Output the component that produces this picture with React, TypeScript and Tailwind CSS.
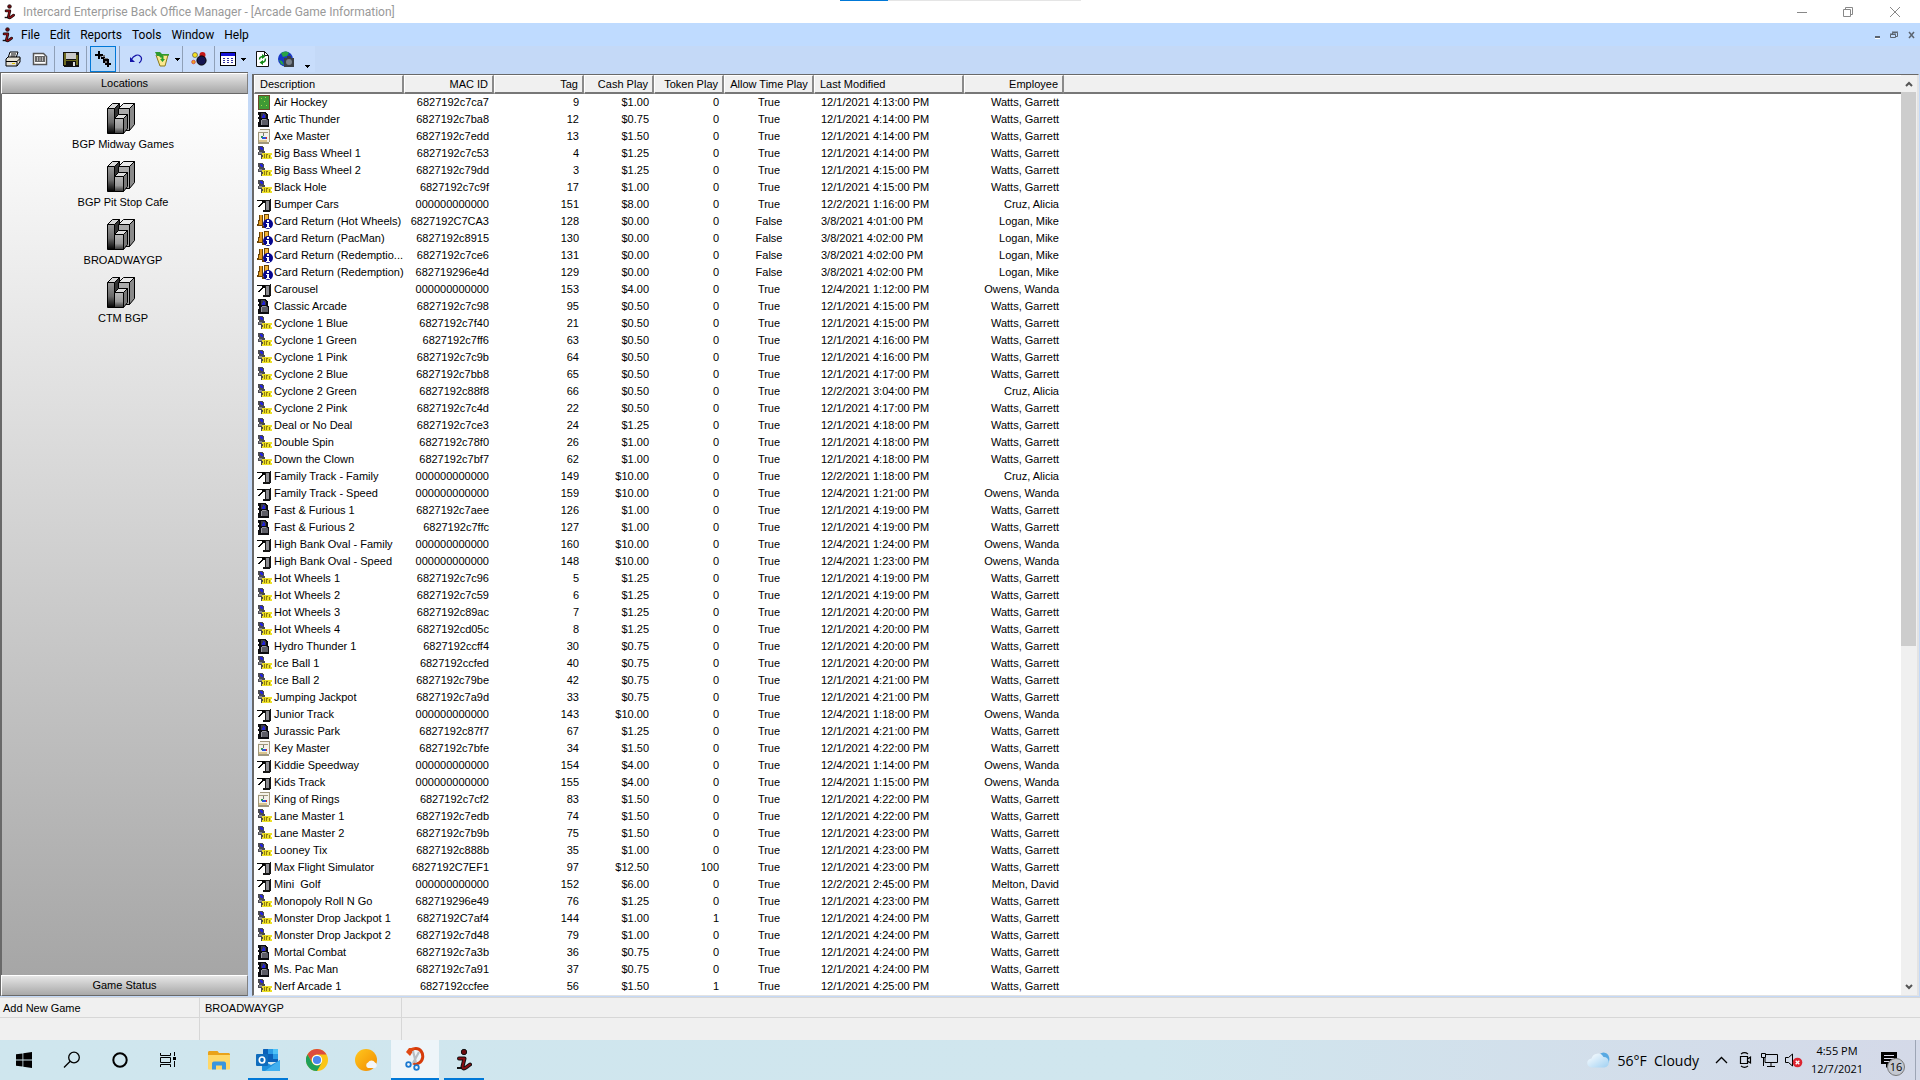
import React, { useState } from 'react';

type IconKind = 'hockey' | 'video' | 'crane' | 'ticket' | 'swipe' | 'return';

type Game = [
  icon: IconKind,
  name: string,
  mac: string,
  tag: number,
  cash: string,
  token: number,
  timePlay: boolean,
  modified: string,
  employee: string,
];

const WATTS = 'Watts, Garrett';
const CRUZ = 'Cruz, Alicia';
const LOGAN = 'Logan, Mike';
const OWENS = 'Owens, Wanda';
const NO_MAC = '000000000000';

const games: Game[] = [
  ['hockey', 'Air Hockey', '6827192c7ca7', 9, '$1.00', 0, true, '12/1/2021 4:13:00 PM', WATTS],
  ['video', 'Artic Thunder', '6827192c7ba8', 12, '$0.75', 0, true, '12/1/2021 4:14:00 PM', WATTS],
  ['crane', 'Axe Master', '6827192c7edd', 13, '$1.50', 0, true, '12/1/2021 4:14:00 PM', WATTS],
  ['ticket', 'Big Bass Wheel 1', '6827192c7c53', 4, '$1.25', 0, true, '12/1/2021 4:14:00 PM', WATTS],
  ['ticket', 'Big Bass Wheel 2', '6827192c79dd', 3, '$1.25', 0, true, '12/1/2021 4:15:00 PM', WATTS],
  ['ticket', 'Black Hole', '6827192c7c9f', 17, '$1.00', 0, true, '12/1/2021 4:15:00 PM', WATTS],
  ['swipe', 'Bumper Cars', NO_MAC, 151, '$8.00', 0, true, '12/2/2021 1:16:00 PM', CRUZ],
  ['return', 'Card Return (Hot Wheels)', '6827192C7CA3', 128, '$0.00', 0, false, '3/8/2021 4:01:00 PM', LOGAN],
  ['return', 'Card Return (PacMan)', '6827192c8915', 130, '$0.00', 0, false, '3/8/2021 4:02:00 PM', LOGAN],
  ['return', 'Card Return (Redemptio...', '6827192c7ce6', 131, '$0.00', 0, false, '3/8/2021 4:02:00 PM', LOGAN],
  ['return', 'Card Return (Redemption)', '682719296e4d', 129, '$0.00', 0, false, '3/8/2021 4:02:00 PM', LOGAN],
  ['swipe', 'Carousel', NO_MAC, 153, '$4.00', 0, true, '12/4/2021 1:12:00 PM', OWENS],
  ['video', 'Classic Arcade', '6827192c7c98', 95, '$0.50', 0, true, '12/1/2021 4:15:00 PM', WATTS],
  ['ticket', 'Cyclone 1 Blue', '6827192c7f40', 21, '$0.50', 0, true, '12/1/2021 4:15:00 PM', WATTS],
  ['ticket', 'Cyclone 1 Green', '6827192c7ff6', 63, '$0.50', 0, true, '12/1/2021 4:16:00 PM', WATTS],
  ['ticket', 'Cyclone 1 Pink', '6827192c7c9b', 64, '$0.50', 0, true, '12/1/2021 4:16:00 PM', WATTS],
  ['ticket', 'Cyclone 2 Blue', '6827192c7bb8', 65, '$0.50', 0, true, '12/1/2021 4:17:00 PM', WATTS],
  ['ticket', 'Cyclone 2 Green', '6827192c88f8', 66, '$0.50', 0, true, '12/2/2021 3:04:00 PM', CRUZ],
  ['ticket', 'Cyclone 2 Pink', '6827192c7c4d', 22, '$0.50', 0, true, '12/1/2021 4:17:00 PM', WATTS],
  ['ticket', 'Deal or No Deal', '6827192c7ce3', 24, '$1.25', 0, true, '12/1/2021 4:18:00 PM', WATTS],
  ['ticket', 'Double Spin', '6827192c78f0', 26, '$1.00', 0, true, '12/1/2021 4:18:00 PM', WATTS],
  ['ticket', 'Down the Clown', '6827192c7bf7', 62, '$1.00', 0, true, '12/1/2021 4:18:00 PM', WATTS],
  ['swipe', 'Family Track - Family', NO_MAC, 149, '$10.00', 0, true, '12/2/2021 1:18:00 PM', CRUZ],
  ['swipe', 'Family Track - Speed', NO_MAC, 159, '$10.00', 0, true, '12/4/2021 1:21:00 PM', OWENS],
  ['video', 'Fast & Furious 1', '6827192c7aee', 126, '$1.00', 0, true, '12/1/2021 4:19:00 PM', WATTS],
  ['video', 'Fast & Furious 2', '6827192c7ffc', 127, '$1.00', 0, true, '12/1/2021 4:19:00 PM', WATTS],
  ['swipe', 'High Bank Oval - Family', NO_MAC, 160, '$10.00', 0, true, '12/4/2021 1:24:00 PM', OWENS],
  ['swipe', 'High Bank Oval - Speed', NO_MAC, 148, '$10.00', 0, true, '12/4/2021 1:23:00 PM', OWENS],
  ['ticket', 'Hot Wheels 1', '6827192c7c96', 5, '$1.25', 0, true, '12/1/2021 4:19:00 PM', WATTS],
  ['ticket', 'Hot Wheels 2', '6827192c7c59', 6, '$1.25', 0, true, '12/1/2021 4:19:00 PM', WATTS],
  ['ticket', 'Hot Wheels 3', '6827192c89ac', 7, '$1.25', 0, true, '12/1/2021 4:20:00 PM', WATTS],
  ['ticket', 'Hot Wheels 4', '6827192cd05c', 8, '$1.25', 0, true, '12/1/2021 4:20:00 PM', WATTS],
  ['video', 'Hydro Thunder 1', '6827192ccff4', 30, '$0.75', 0, true, '12/1/2021 4:20:00 PM', WATTS],
  ['ticket', 'Ice Ball 1', '6827192ccfed', 40, '$0.75', 0, true, '12/1/2021 4:20:00 PM', WATTS],
  ['ticket', 'Ice Ball 2', '6827192c79be', 42, '$0.75', 0, true, '12/1/2021 4:21:00 PM', WATTS],
  ['ticket', 'Jumping Jackpot', '6827192c7a9d', 33, '$0.75', 0, true, '12/1/2021 4:21:00 PM', WATTS],
  ['swipe', 'Junior Track', NO_MAC, 143, '$10.00', 0, true, '12/4/2021 1:18:00 PM', OWENS],
  ['video', 'Jurassic Park', '6827192c87f7', 67, '$1.25', 0, true, '12/1/2021 4:21:00 PM', WATTS],
  ['crane', 'Key Master', '6827192c7bfe', 34, '$1.50', 0, true, '12/1/2021 4:22:00 PM', WATTS],
  ['swipe', 'Kiddie Speedway', NO_MAC, 154, '$4.00', 0, true, '12/4/2021 1:14:00 PM', OWENS],
  ['swipe', 'Kids Track', NO_MAC, 155, '$4.00', 0, true, '12/4/2021 1:15:00 PM', OWENS],
  ['crane', 'King of Rings', '6827192c7cf2', 83, '$1.50', 0, true, '12/1/2021 4:22:00 PM', WATTS],
  ['ticket', 'Lane Master 1', '6827192c7edb', 74, '$1.50', 0, true, '12/1/2021 4:22:00 PM', WATTS],
  ['ticket', 'Lane Master 2', '6827192c7b9b', 75, '$1.50', 0, true, '12/1/2021 4:23:00 PM', WATTS],
  ['ticket', 'Looney Tix', '6827192c888b', 35, '$1.00', 0, true, '12/1/2021 4:23:00 PM', WATTS],
  ['swipe', 'Max Flight Simulator', '6827192C7EF1', 97, '$12.50', 100, true, '12/1/2021 4:23:00 PM', WATTS],
  ['swipe', 'Mini  Golf', NO_MAC, 152, '$6.00', 0, true, '12/2/2021 2:45:00 PM', 'Melton, David'],
  ['ticket', 'Monopoly Roll N Go', '682719296e49', 76, '$1.25', 0, true, '12/1/2021 4:23:00 PM', WATTS],
  ['ticket', 'Monster Drop Jackpot 1', '6827192C7af4', 144, '$1.00', 1, true, '12/1/2021 4:24:00 PM', WATTS],
  ['ticket', 'Monster Drop Jackpot 2', '6827192c7d48', 79, '$1.00', 0, true, '12/1/2021 4:24:00 PM', WATTS],
  ['video', 'Mortal Combat', '6827192c7a3b', 36, '$0.75', 0, true, '12/1/2021 4:24:00 PM', WATTS],
  ['video', 'Ms. Pac Man', '6827192c7a91', 37, '$0.75', 0, true, '12/1/2021 4:24:00 PM', WATTS],
  ['ticket', 'Nerf Arcade 1', '6827192ccfee', 56, '$1.50', 1, true, '12/1/2021 4:25:00 PM', WATTS],
];

const columns = [
  { label: 'Description', width: 'w-[150px]', align: 'text-left' },
  { label: 'MAC ID', width: 'w-[90px]', align: 'text-right' },
  { label: 'Tag', width: 'w-[90px]', align: 'text-right' },
  { label: 'Cash Play', width: 'w-[70px]', align: 'text-right' },
  { label: 'Token Play', width: 'w-[70px]', align: 'text-right' },
  { label: 'Allow Time Play', width: 'w-[90px]', align: 'text-center' },
  { label: 'Last Modified', width: 'w-[150px]', align: 'text-left' },
  { label: 'Employee', width: 'w-[100px]', align: 'text-right' },
];

const locations = ['BGP Midway Games', 'BGP Pit Stop Cafe', 'BROADWAYGP', 'CTM BGP'];
const menus = ['File', 'Edit', 'Reports', 'Tools', 'Window', 'Help'];

function GameIcon({ kind }: { kind: IconKind }) {
  return (
    <svg width="16" height="17" viewBox="0 0 16 17" shapeRendering="crispEdges" className="shrink-0" aria-hidden="true">
      {kind === 'hockey' && (
        <>
          <rect x="1" y="1" width="12" height="15" fill="#6b4a2a" />
          <rect x="2" y="2" width="10" height="13" fill="#3f9a35" />
          <path d="M4 4h1v1H4zM8 3h1v1H8zM7 7h1v1H7zM9 11h1v1H9zM4 11h1v1H4z" fill="#a8d848" />
        </>
      )}
      {kind === 'video' && (
        <>
          <path d="M1 1h8v1h1v1h1v5h1v8H1v-5h1V8H1V6h1V4H1z" fill="#0c0c10" />
          <path d="M4 2h4v1h1v4H4z" fill="#3b3b46" />
          <path d="M5 8h5v1H5zM4 9h7v5H4z" fill="#5d5d66" />
          <path d="M6 3h1v1h1v3H5V5h1z" fill="#2222d8" />
          <path d="M4 9h1v5H4zM5 8h4v1H5z" fill="#9a9aa2" />
        </>
      )}
      {kind === 'crane' && (
        <>
          <path d="M3 1h10v3h-1v11H2V4H1z" fill="#f4f1e8" />
          <path d="M3 1h10v1H3zM12 2h1v12h-1zM1 14h11v2H1zM1 4h10v1H1zM1 4h1v11H1z" fill="#a0977c" />
          <path d="M2 12h8v2H2z" fill="#d9c48e" />
          <path d="M6 5h1v3H6z" fill="#777" />
          <path d="M4 8h2v2H4z" fill="#2f9c50" />
          <path d="M5 9h4v2H5z" fill="#2b55d6" />
          <path d="M9 9h1v2H9z" fill="#d23" />
        </>
      )}
      {kind === 'ticket' && (
        <>
          <path d="M1 1h5v1h1v4h1v8H4v-4H1V7h1V5H1z" fill="#4a4a52" />
          <path d="M3 2h2v1h1v2H4V4H3z" fill="#2222e0" />
          <path d="M2 7h3v2H2z" fill="#86868c" />
          <path d="M5 8h10v2h-1v2h1v2H5v-2h1v-2H5z" fill="#ecdf27" />
          <path d="M7 9h1v4H7zM9 9h2v1h-1v3H9zM12 10h1v3h-1z" fill="#8f7d10" />
        </>
      )}
      {kind === 'swipe' && (
        <>
          <path d="M0 4h8v1H0zM5 5h3v1H5zM5 6h2v1H5zM4 7h2v1H4zM3 8h2v1H3zM2 9h2v1H2zM1 10h2v1H1zM6 6h2v1H6z" fill="#050505" />
          <path d="M8 4h5V3h1v12h-1v1H6v-2h2z" fill="#151515" />
          <path d="M9 5h3v9H9z" fill="#8b8b90" />
        </>
      )}
      {kind === 'return' && (
        <>
          <path d="M2 2h4v11H0v-2h1V7h1z" fill="#6b4203" />
          <path d="M3 2h2v10H2V8h1z" fill="#e2991e" />
          <path d="M7 1h5v14H5v-2h2z" fill="#6b4203" />
          <path d="M8 2h3v12H7v-1h1z" fill="#f3b537" />
          <g shapeRendering="auto">
            <circle cx="11" cy="11" r="5" fill="#06068e" />
          </g>
          <path d="M10 7h2v2h-2zM9 10h3v4h1v1H9v-1h1v-3H9z" fill="#fff" />
        </>
      )}
    </svg>
  );
}

function InterCardLogo({ className }: { className?: string }) {
  return (
    <svg viewBox="0 0 16 22" className={className} aria-hidden="true">
      <g fill="none" strokeLinecap="round" strokeLinejoin="round">
        <path d="M3 9.500h5.500L6.500 17.500c-.3 2 1.500 2.500 3.500 1l4-3" stroke="#111" strokeWidth="4" />
        <path d="M3 9.500h5.500L6.500 17.500c-.3 2 1.500 2.500 3.500 1l4-3" stroke="#8a0d12" strokeWidth="2" />
      </g>
      <path d="M1 19h5" stroke="#111" strokeWidth="2" />
      <circle cx="8" cy="3" r="2.700" fill="#6d0a0e" stroke="#111" />
    </svg>
  );
}

function BuildingsIcon() {
  return (
    <svg width="28" height="32" viewBox="0 0 28 32" className="mr-1" aria-hidden="true">
      <defs>
        <linearGradient id="tower" x1="0" y1="0" x2="0" y2="1">
          <stop offset="0" stopColor="#999" />
          <stop offset=".55" stopColor="#6a6a6a" />
          <stop offset="1" stopColor="#000" />
        </linearGradient>
        <linearGradient id="block" x1="0" y1="0" x2="0" y2="1">
          <stop offset="0" stopColor="#b8b8b8" />
          <stop offset=".6" stopColor="#999" />
          <stop offset="1" stopColor="#333" />
        </linearGradient>
      </defs>
      <g stroke="#000" strokeLinejoin="round">
        <path d="M.5 5.500l5-5h7l-5 5z" fill="#d8d8d8" />
        <path d="M7.500 5.500l5-5v26l-5 4z" fill="#333" />
        <path d="M.5 5.500h7v25h-7z" fill="url(#tower)" />
        <path d="M11.500 5.500l5-5h11l-5 5z" fill="#e8e8e8" />
        <path d="M22.500 5.500l5-5v21l-5 6z" fill="#8a8a8a" />
        <path d="M11.500 5.500h11v22h-11z" fill="#aaa" />
        <path d="M7.500 15.500l4-4h9l-4 4z" fill="#ddd" />
        <path d="M16.500 15.500l4-4v14l-4 5z" fill="#777" />
        <path d="M7.500 15.500h9v15h-9z" fill="url(#block)" />
      </g>
    </svg>
  );
}

function Separator() {
  return <span className="h-full w-px bg-[#8fa0b8]" />;
}

function DropArrow() {
  return (
    <svg width="5" height="3" viewBox="0 0 5 3" shapeRendering="crispEdges" aria-hidden="true">
      <path d="M0 0h5v1H4v1H3v1H2V2H1V1H0z" />
    </svg>
  );
}

function ToolButton({ label, children, className = 'w-[26px]' }: { label: string; children: React.ReactNode; className?: string }) {
  return (
    <button type="button" aria-label={label} className={`flex h-[26px] items-center justify-center gap-1 ${className}`}>
      {children}
    </button>
  );
}

function Toolbar() {
  return (
    <div role="toolbar" aria-label="Main toolbar" className="flex h-[26px] bg-[#c4d9f7]">
      <div className="flex bg-[#c8ddfb]">
        <ToolButton label="Print">
          <svg width="16" height="16" viewBox="0 0 16 16">
            <path d="M5 1h8l-2 6H3z" fill="#fff" stroke="#000" />
            <path d="M6 3h5M5.500 5h5" stroke="#000" />
            <path d="M1 8l2-2h12v5l-3 4H1z" fill="#e4e0d4" stroke="#000" />
            <path d="M1 10.500h11l3-3M12 10.500V15" stroke="#000" fill="none" />
            <path d="M7 12.500h3" stroke="#e0c400" />
          </svg>
        </ToolButton>
        <ToolButton label="Card" className="w-7">
          <svg width="16" height="14" viewBox="0 0 16 14">
            <path d="M1.500 1.500h10l3 3v8h-13z" fill="#fff" stroke="#555" strokeWidth="1.500" />
            <rect x="3" y="4" width="10" height="6" fill="#666" />
            <path d="M5.500 5v4M8 5v4M10.500 5v4" stroke="#bbb" />
          </svg>
        </ToolButton>
        <Separator />
        <ToolButton label="Save" className="w-[31px]">
          <svg width="16" height="16" viewBox="0 0 16 16" shapeRendering="crispEdges">
            <path d="M0 1h16v15H1v-1H0z" fill="#111" />
            <path d="M1 2h2v12H1zM13 4h2v10h-2zM3 9h10v1H3z" fill="#6e6b20" />
            <rect x="3" y="2" width="10" height="6" fill="#c9c9c9" />
            <rect x="10" y="11" width="2" height="4" fill="#ddd" />
          </svg>
        </ToolButton>
        <Separator />
        <ToolButton label="Link devices" className="mx-[3px] w-[26px] border border-[#0078d7] bg-[#b5d7f7]">
          <svg width="16" height="16" viewBox="0 0 16 16" shapeRendering="crispEdges">
            <path d="M0 3h8v2H0zM3 0h2v8H3zM6 6h2v2H6zM8 8h6v2H8zM8 6h2v6H8zM10 12h6v2h-6zM12 10h2v6h-2z" fill="#000" />
            <path d="M5 5h2v1H5zM9 7h4v1H9zM10 10h2v2h-2zM8 4h2v2H8z" fill="#777" />
          </svg>
        </ToolButton>
        <Separator />
        <ToolButton label="Undo" className="w-8">
          <svg width="14" height="12" viewBox="0 0 14 12">
            <path d="M2 7C5 2 9 1 11 3c3 2 1 6-1 7" fill="none" stroke="#1414a8" strokeWidth="1.200" />
            <path d="M1 4v5h5z" fill="#1414a8" />
          </svg>
        </ToolButton>
        <ToolButton label="Filter" className="w-[30px]">
          <svg width="17" height="16" viewBox="0 0 17 16">
            <path d="M2 4h12l-3 11H6z" fill="#fbe88e" stroke="#8a7a1c" />
            <path d="M1 1h5l2 2h7v1.500H9L7 7 5 5H3z" fill="#2e9a2e" />
            <path d="M7.500 5h2v3H11l-2.500 3L6 8h1.500z" fill="#27a02c" />
          </svg>
          <DropArrow />
        </ToolButton>
        <Separator />
        <ToolButton label="Prizes" className="w-[31px]">
          <svg width="16" height="16" viewBox="0 0 16 16">
            <circle cx="4" cy="4" r="2.500" fill="#f4e01c" stroke="#555" strokeWidth=".7" />
            <circle cx="11.500" cy="4" r="3" fill="#c51717" />
            <circle cx="10.500" cy="9.500" r="4.600" fill="#151550" stroke="#000" />
            <circle cx="2.500" cy="11" r="1.800" fill="#f0a020" stroke="#c33" strokeWidth=".7" />
          </svg>
        </ToolButton>
        <Separator />
        <ToolButton label="View" className="w-9">
          <svg width="17" height="16" viewBox="0 0 17 16" shapeRendering="crispEdges">
            <path d="M0 1h16v14H0z" fill="#000" />
            <path d="M1 5h14v9H1z" fill="#fff" />
            <path d="M1 2h14v3H1z" fill="#1313d5" />
            <path d="M3 7h2v1H3zM7 7h2v1H7zM11 7h2v1h-2zM3 9h2v1H3zM7 9h2v1H7zM11 9h2v1h-2zM3 11h2v1H3zM7 11h2v1H7zM11 11h2v1h-2z" fill="#34349c" />
          </svg>
          <DropArrow />
        </ToolButton>
        <ToolButton label="Refresh" className="w-[22px]">
          <svg width="13" height="16" viewBox="0 0 13 16">
            <path d="M.5.5h8l4 4v11H.5z" fill="#fff" stroke="#111" />
            <path d="M8.500.5v4h4" fill="none" stroke="#111" />
            <path d="M3.500 8.500c0-2 1-3 4-3M9.500 7.500c0 3-1 4-4 4" fill="none" stroke="#128a16" strokeWidth="1.400" />
            <path d="M6 3l3.500 2.500L6 8zM7 9l-3.500 2.500L7 14z" fill="#128a16" />
          </svg>
        </ToolButton>
        <ToolButton label="Web">
          <svg width="16" height="16" viewBox="0 0 16 16">
            <circle cx="7.500" cy="8" r="7.500" fill="#1738c4" />
            <path d="M3 2c3-2 6-2 8 0l-2 3-4 1zM1 9l3 1 2 4-3-1z" fill="#27a346" />
            <path d="M6 7h3V5h4v2h3v9H6z" fill="#3a3f46" />
            <circle cx="11" cy="11" r="3" fill="#7b838c" />
          </svg>
        </ToolButton>
        <button type="button" aria-label="Toolbar options" className="flex w-4 items-end justify-center pb-1">
          <DropArrow />
        </button>
      </div>
    </div>
  );
}

function Sidebar() {
  const header =
    'h-[21px] w-full border border-t-white border-l-white border-r-[#808080] border-b-[#696969] bg-linear-to-b from-[#e6e6e6] to-[#a8a8a8] text-center leading-[19px]';
  return (
    <aside className="flex w-[248px] shrink-0 flex-col border-t border-l border-[#696969]">
      <button type="button" className={header}>Locations</button>
      <ul className="flex flex-1 flex-col items-center gap-[10px] border-l border-[#696969] bg-linear-to-b from-white to-[#a6a6a6] pt-[9px] pr-1">
        {locations.map((name) => (
          <li key={name}>
            <button type="button" className="flex flex-col items-center gap-[2px]">
              <BuildingsIcon />
              <span className="leading-[14px]">{name}</span>
            </button>
          </li>
        ))}
      </ul>
      <button type="button" className={header}>Game Status</button>
    </aside>
  );
}

function GameTable() {
  return (
    <table className="w-full table-fixed border-separate border-spacing-0 bg-white">
      <thead>
        <tr>
          {columns.map((col) => (
            <th
              key={col.label}
              className={`h-[19px] border-t border-r-2 border-b-2 border-l border-t-white border-r-[#8a8a8a] border-b-[#777777] border-l-white bg-[#f0f0f0] pr-1 pl-[5px] leading-[16px] font-normal whitespace-nowrap ${col.width} ${col.align}`}
            >
              {col.label}
            </th>
          ))}
          <th className="border-t border-b-2 border-t-white border-b-[#777777] bg-[#f0f0f0]" aria-label="Empty" />
        </tr>
      </thead>
      <tbody>
        {games.map(([icon, name, mac, tag, cash, token, timePlay, modified, employee]) => (
          <tr key={name} className="h-[17px] text-right leading-[17px] whitespace-pre">
            <td className="pl-[3px] text-left">
              <span className="flex items-center gap-px">
                <GameIcon kind={icon} />
                {name}
              </span>
            </td>
            <td className="pr-[5px]">{mac}</td>
            <td className="pr-[5px]">{tag}</td>
            <td className="pr-[5px]">{cash}</td>
            <td className="pr-[5px]">{token}</td>
            <td className="text-center">{timePlay ? 'True' : 'False'}</td>
            <td className="pl-[7px] text-left">{modified}</td>
            <td className="pr-[5px]">{employee}</td>
            <td />
          </tr>
        ))}
      </tbody>
    </table>
  );
}

function ScrollBar() {
  return (
    <div className="flex w-[17px] shrink-0 flex-col border-r border-[#e3e3e3] bg-[#f0f0f0]">
      <button type="button" aria-label="Scroll up" className="flex h-[17px] w-full items-center justify-center">
        <svg width="8" height="6" viewBox="0 0 8 6"><path d="M1 5l3-3 3 3" fill="none" stroke="#555" strokeWidth="2" /></svg>
      </button>
      <div className="flex flex-1 flex-col">
        <div className="h-5/8 w-[15px] bg-[#cdcdcd]" />
      </div>
      <button type="button" aria-label="Scroll down" className="flex h-[17px] w-full items-center justify-center">
        <svg width="8" height="6" viewBox="0 0 8 6"><path d="M1 1l3 3 3-3" fill="none" stroke="#555" strokeWidth="2" /></svg>
      </button>
    </div>
  );
}

function StatusBar() {
  return (
    <footer className="bg-[#f0f0f0]">
      <div className="flex h-5 border-t border-[#d7d7d7] leading-[21px]">
        <span className="w-[200px] border-r border-[#d7d7d7] pl-[3px]">Add New Game</span>
        <span className="w-[202px] border-r border-[#d7d7d7] pl-[5px]">BROADWAYGP</span>
      </div>
      <div className="flex h-[23px] border-t border-[#d7d7d7]">
        <span className="w-[200px] border-r border-[#d7d7d7]" />
        <span className="w-[202px] border-r border-[#d7d7d7]" />
      </div>
    </footer>
  );
}

function Taskbar() {
  const plain = 'flex h-10 w-12 items-center justify-center';
  return (
    <nav aria-label="Taskbar" className="flex h-10 items-stretch justify-between bg-linear-to-r from-[#cfe6ee] via-[#d0e6ee] via-60% to-[#d4d9e8] font-['Open_Sans','Noto_Sans',sans-serif]">
      <div className="flex gap-[3px]">
        <div className="flex">
          <button type="button" aria-label="Start" className={plain}>
            <svg width="16" height="16" viewBox="0 0 16 16">
              <path d="M0 2.300L6.500 1.400v6.200H0zM7.300 1.300L16 0v7.600H7.300zM0 8.400h6.500v6.200L0 13.700zM7.300 8.400H16V16l-8.700-1.300z" />
            </svg>
          </button>
          <button type="button" aria-label="Search" className={plain}>
            <svg width="18" height="18" viewBox="0 0 18 18" fill="none" stroke="#000" strokeWidth="1.300">
              <circle cx="11" cy="6.500" r="5.300" />
              <path d="M7.200 10.300L1 16.500" />
            </svg>
          </button>
          <button type="button" aria-label="Cortana" className={plain}>
            <svg width="16" height="16" viewBox="0 0 16 16"><circle cx="8" cy="8" r="6.700" fill="none" stroke="#000" strokeWidth="2" /></svg>
          </button>
          <button type="button" aria-label="Task view" className={plain}>
            <svg width="16" height="16" viewBox="0 0 16 16" fill="none" stroke="#000">
              <path d="M.5 1v2.500h10V1M.5 15v-2.500h10V15M.5 5.500h10v5H.5zM14.500 0v4M14.500 9v6" />
              <path d="M13 5h3v3h-3z" fill="#000" stroke="none" />
            </svg>
          </button>
        </div>
        <div className="flex gap-px">
          <button type="button" aria-label="File Explorer" className={plain}>
            <svg width="22" height="19" viewBox="0 0 22 19">
              <path d="M0 1.500C0 .7.600 0 1.500 0h8L11 2h9.500c.8 0 1.500.7 1.500 1.500V6H0z" fill="#e9a21a" />
              <path d="M0 4h22v13.500c0 .5-.4 1-1 1H1c-.6 0-1-.5-1-1z" fill="#ffd868" />
              <path d="M4 18.500v-6c0-1 .7-2 2-2h10c1.300 0 2 1 2 2v6h-4v-4H8v4z" fill="#3a96dd" />
            </svg>
          </button>
          <button type="button" aria-label="Outlook" className="flex h-10 w-12 flex-col items-center">
            <span className="flex flex-1 items-center pt-[2px]">
              <svg width="24" height="22" viewBox="0 0 24 22">
                <path d="M8 0h13c.6 0 1 .4 1 1v12H7V1c0-.6.400-1 1-1z" fill="#0a60b8" />
                <path d="M12 0h5v5h-5zM17 5h5v5h-5z" fill="#2a9be6" />
                <path d="M17 0h5v5h-5z" fill="#4fc3f7" />
                <path d="M7 5h5v5H7z" fill="#0f55a0" />
                <path d="M6 11l9 5 9-5v10c0 .6-.4 1-1 1H7c-.6 0-1-.4-1-1z" fill="#1e8fdc" />
                <path d="M24 11L9 22h14c.6 0 1-.4 1-1z" fill="#41b0f0" />
                <rect y="5" width="12" height="12" rx="1" fill="#0f6cbd" />
                <ellipse cx="6" cy="11" rx="2.700" ry="3" fill="none" stroke="#fff" strokeWidth="1.700" />
              </svg>
            </span>
            <span className="h-[2px] w-10 bg-[#0078d7]" />
          </button>
          <button type="button" aria-label="Chrome" className={plain}>
            <svg width="22" height="22" viewBox="0 0 22 22">
              <circle cx="11" cy="11" r="11" fill="#fbc516" />
              <path d="M1.470 5.500A11 11 0 0 1 20.530 5.500H11a5.500 5.500 0 0 0-4.760 8.250z" fill="#dd4b3e" />
              <path d="M1.470 5.500A11 11 0 0 0 11 22l4.760-8.250a5.500 5.500 0 0 1-9.520 0z" fill="#1ea05a" />
              <circle cx="11" cy="11" r="5.200" fill="#fff" />
              <circle cx="11" cy="11" r="4.100" fill="#4b87ee" />
            </svg>
          </button>
          <button type="button" aria-label="Weather" className={plain}>
            <svg width="23" height="22" viewBox="0 0 23 22">
              <defs>
                <linearGradient id="sun" x1="0" y1="0" x2="1" y2="1">
                  <stop offset="0" stopColor="#ffc81e" />
                  <stop offset="1" stopColor="#f28a00" />
                </linearGradient>
              </defs>
              <circle cx="11" cy="11" r="11" fill="url(#sun)" />
              <path d="M13 19a3 3 0 0 1 0-5.500 4 4 0 0 1 7 0A3 3 0 0 1 20 19z" fill="#f4f6f8" />
            </svg>
          </button>
          <button type="button" aria-label="Snipping Tool" className="flex h-10 w-12 items-center justify-center border-b-2 border-[#0078d7] bg-[#eef5f9]">
            <svg width="20" height="24" viewBox="0 0 20 24">
              <path d="M3 6C6 1 13 0 16 4c3 4 2 10-2 12-2 1-4 1-6 0" fill="none" stroke="#d63c0b" strokeWidth="3" />
              <path d="M1 5l3-4 6 0-5 8z" fill="#e04a14" />
              <path d="M8 4l3 12M14 5l-6 11" stroke="#b9bdc2" strokeWidth="2.200" />
              <circle cx="3.500" cy="17.500" r="2.300" fill="none" stroke="#1b79d0" strokeWidth="1.800" />
              <circle cx="11.500" cy="20.500" r="2.300" fill="none" stroke="#1b79d0" strokeWidth="1.800" />
            </svg>
          </button>
          <button type="button" aria-label="Intercard" className="flex h-10 w-12 flex-col items-center">
            <span className="flex flex-1 items-center pt-[2px]">
              <InterCardLogo className="h-6 w-4" />
            </span>
            <span className="h-[2px] w-10 bg-[#0078d7]" />
          </button>
        </div>
      </div>

      <div className="flex items-center">
        <button type="button" className="flex items-center gap-2 text-[14px]">
          <svg width="23" height="16" viewBox="0 0 23 16">
            <defs>
              <linearGradient id="cloud" x1="0" y1="0" x2="1" y2="1">
                <stop offset="0" stopColor="#fff" />
                <stop offset="1" stopColor="#9fd0f2" />
              </linearGradient>
            </defs>
            <path d="M12 3a5.500 5.500 0 0 1 10 2c1 3 0 6-3 8z" fill="#58a9e2" />
            <path d="M5 15.500a4.500 4.500 0 0 1-.5-9A6.500 6.500 0 0 1 16.500 5a5.300 5.300 0 0 1 1 10.500z" fill="url(#cloud)" />
          </svg>
          <span className="whitespace-pre">56°F  Cloudy</span>
        </button>
        <div className="flex items-center gap-2 pl-4">
          <button type="button" aria-label="Show hidden icons" className="w-4">
            <svg width="13" height="8" viewBox="0 0 13 8"><path d="M1 7l5.500-5.500L12 7" fill="none" stroke="#000" strokeWidth="1.300" /></svg>
          </button>
          <button type="button" aria-label="Meet now" className="w-[14px]">
            <svg width="13" height="16" viewBox="0 0 13 16" fill="none" stroke="#000" strokeWidth="1.200">
              <path d="M1.500 4.500h7v7h-7zM8.500 7l3-2v6l-3-2M2 2c2-1.500 5-1.500 7 0M2 14c2 1.500 5 1.500 7 0" />
            </svg>
          </button>
          <button type="button" aria-label="Network" className="w-4">
            <svg width="17" height="14" viewBox="0 0 17 14" fill="none" stroke="#000">
              <path d="M5 1.500h11.500v8H4V5M10 10v3M6 13.500h8M.5.500h4v4h-4zM2.500 5v8" />
            </svg>
          </button>
          <button type="button" aria-label="Volume muted" className="w-[18px]">
            <svg width="18" height="16" viewBox="0 0 18 16">
              <path d="M.5 5.500h3L7.500 2v12l-4-3.500h-3z" fill="none" stroke="#000" />
              <circle cx="12.500" cy="10.500" r="4.800" fill="#dc2430" />
              <path d="M10.700 8.700l3.600 3.600m0-3.600l-3.600 3.600" stroke="#fff" strokeWidth="1.400" />
            </svg>
          </button>
        </div>
        <button type="button" className="ml-2 w-[52px] text-center text-[11px] leading-[18px]">
          4:55 PM
          <br />
          12/7/2021
        </button>
        <button type="button" aria-label="16 notifications" className="relative ml-4 h-10 w-8">
          <svg width="16" height="16" viewBox="0 0 16 16" className="absolute top-3 left-[2px]">
            <path d="M0 0h16v12H9l-4 4v-4H0z" />
            <path d="M3 3.500h10M3 6.500h10M3 9.500h6" stroke="#dde" />
          </svg>
          <span className="absolute top-[18px] left-2 flex size-[18px] items-center justify-center rounded-full border border-[#777] bg-[#c4c8d0] text-[11px]">
            16
          </span>
        </button>
        <span className="ml-1 h-full w-[5px] border-l border-[#9da5b5]" />
      </div>
    </nav>
  );
}

export default function App() {
  const [openMenu, setOpenMenu] = useState<string | null>(null);

  return (
    <div className="flex h-screen flex-col overflow-hidden bg-[#c4d9f7] font-['Liberation_Sans',Arial,sans-serif] text-[11px] text-black">
      {/* Title bar */}
      <header className="relative flex h-[23px] items-center justify-between bg-white font-[Roboto,'Open_Sans',sans-serif]">
        <div className="flex items-center gap-2 pl-1">
          <InterCardLogo className="h-4 w-[11px]" />
          <h1 className="text-[12px] text-[#999999]">Intercard Enterprise Back Office Manager - [Arcade Game Information]</h1>
        </div>
        <div className="absolute top-0 left-[840px] flex h-px w-[241px] bg-[#e5e5e5]">
          <span className="w-12 bg-[#0078d7]" />
        </div>
        <div className="flex">
          <button type="button" aria-label="Minimize" className="flex w-[46px] justify-center">
            <svg width="10" height="10" viewBox="0 0 10 10"><path d="M0 5.500h10" stroke="#888" /></svg>
          </button>
          <button type="button" aria-label="Restore" className="flex w-[45px] justify-center">
            <svg width="10" height="10" viewBox="0 0 10 10" fill="none" stroke="#888"><path d="M.5 2.500h7v7h-7zM2.500 2.500v-2h7v7h-2" /></svg>
          </button>
          <button type="button" aria-label="Close" className="flex w-[50px] justify-center">
            <svg width="10" height="10" viewBox="0 0 10 10"><path d="M0 0l10 10M10 0L0 10" stroke="#888" /></svg>
          </button>
        </div>
      </header>

      {/* Menu bar */}
      <div className="flex h-[23px] items-center justify-between bg-[#bfdbff] font-[Roboto,'Open_Sans',sans-serif] text-[12px]">
        <div className="flex items-center gap-2 pl-[2px]">
          <InterCardLogo className="h-4 w-[11px]" />
          <div role="menubar" className="flex gap-[10px]">
            {menus.map((m) => (
              <button key={m} type="button" role="menuitem" aria-expanded={openMenu === m} onClick={() => setOpenMenu(openMenu === m ? null : m)}>
                {m}
              </button>
            ))}
          </div>
        </div>
        <div className="flex gap-[10px] pr-1">
          <button type="button" aria-label="Minimize window">
            <svg width="8" height="8" viewBox="0 0 8 8" shapeRendering="crispEdges"><path d="M3 5h5v2H3z" fill="#5b6470" /><path d="M3 7h5v1H3z" fill="#fff" /></svg>
          </button>
          <button type="button" aria-label="Restore window">
            <svg width="8" height="8" viewBox="0 0 8 8" fill="none" stroke="#5b6470"><path d="M.5 3.500h5v3h-5zM2.500 3V1.500h5v4H6M2 1h6M0 3h6" /></svg>
          </button>
          <button type="button" aria-label="Close window">
            <svg width="8" height="8" viewBox="0 0 8 8"><path d="M1 1l5 6M6 1L1 7" stroke="#5b6470" strokeWidth="1.500" /></svg>
          </button>
        </div>
      </div>

      <Toolbar />

      <main className="flex min-h-0 flex-1 gap-1 pb-px">
        <Sidebar />
        <section aria-label="Games" className="mt-[2px] mr-px flex min-w-0 flex-1 border border-l-2 border-t-[#696969] border-r-[#e3e3e3] border-b-[#e3e3e3] border-l-[#696969] bg-white">
          <div className="min-w-0 flex-1 overflow-hidden">
            <GameTable />
          </div>
          <ScrollBar />
        </section>
      </main>

      <StatusBar />
      <Taskbar />
    </div>
  );
}
